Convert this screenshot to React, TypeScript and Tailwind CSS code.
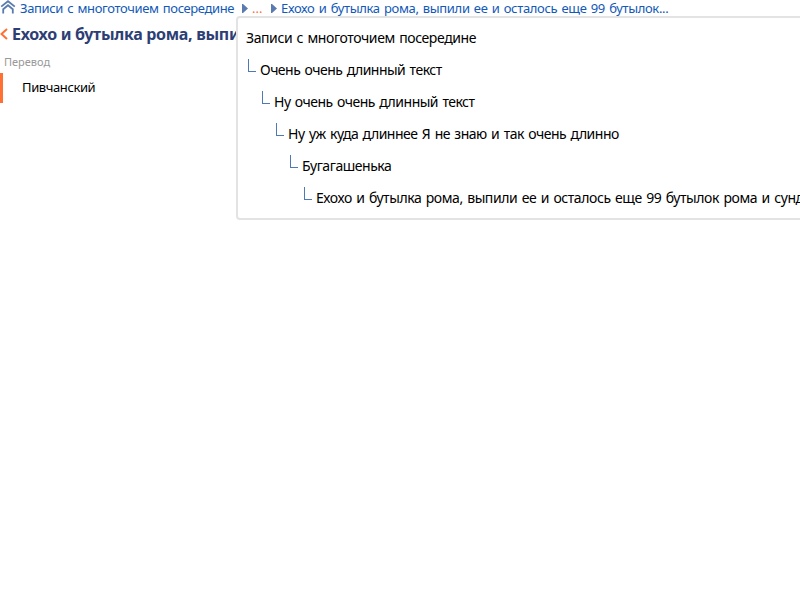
type Item = { text: string; indent: string; tracking: string };

const trail: Item[] = [
  { text: 'Очень очень длинный текст', indent: 'ml-[10px]', tracking: 'tracking-[-0.52px]' },
  { text: 'Ну очень очень длинный текст', indent: 'ml-[24px]', tracking: 'tracking-[-0.5px]' },
  { text: 'Ну уж куда длиннее Я не знаю и так очень длинно', indent: 'ml-[38px]', tracking: 'tracking-[-0.49px]' },
  { text: 'Бугагашенька', indent: 'ml-[52px]', tracking: 'tracking-[-0.45px]' },
  {
    text: 'Ехохо и бутылка рома, выпили ее и осталось еще 99 бутылок рома и сундук мертвеца',
    indent: 'ml-[66px]',
    tracking: 'tracking-[-0.42px]',
  },
];

function HomeIcon() {
  return (
    <svg className="-mt-[2px] h-[14px] w-[16px] shrink-0" viewBox="0 0 16 14" fill="none" stroke="#5b7bb0" strokeWidth="1.8">
      <path d="M1.2 6.6 8 1.2l6.8 5.4" />
      <path d="M3.2 13.5V9.2L8 5.2l4.8 4v4.3" />
    </svg>
  );
}

function Arrow() {
  return (
    <svg className="h-[9px] w-[6px] shrink-0" viewBox="0 0 6 9" fill="#5b7bb0">
      <path d="M0 0h1l5 4.5L1 9H0z" />
    </svg>
  );
}

export default function App() {
  return (
    <div className="relative h-[600px] w-[800px] overflow-hidden bg-white font-['Noto_Sans',sans-serif] text-sm text-black [word-spacing:1.2px]">
      <nav className="flex h-4 items-center whitespace-nowrap text-[13px] leading-4 text-[#1259b8]">
        <HomeIcon />
        <span className="ml-1 w-[222px] tracking-[-0.37px]">Записи с многоточием посередине</span>
        <Arrow />
        <span className="ml-1 w-[15px] text-[#ff7033]">...</span>
        <span className="ml-1 flex">
          <Arrow />
        </span>
        <span className="ml-1 tracking-[-0.34px]">Ехохо и бутылка рома, выпили ее и осталось еще 99 бутылок...</span>
      </nav>
      <header className="flex h-9 items-center whitespace-nowrap">
        <svg className="h-[12px] w-[8px] shrink-0" viewBox="0 0 8 12" fill="none" stroke="#ff7033" strokeWidth="2">
          <path d="M7 1 1.5 6 7 11" />
        </svg>
        <h1 className="ml-1 w-[224px] overflow-hidden text-[16px] font-bold tracking-[-0.3px] text-[#2d3e75] [word-spacing:0px]">
          Ехохо и бутылка рома, выпили ее
        </h1>
      </header>
      <section>
        <h2 className="flex h-[21px] items-center pb-[2px] pl-1 text-[11px] text-[#999999]">Перевод</h2>
        <div className="flex h-[30px] items-center border-l-[3px] border-[#ff7033] pb-[2px] pl-[19px] text-[13px] tracking-[-0.4px]">
          Пивчанский
        </div>
      </section>
      <div className="absolute left-[236px] top-4 w-[640px] rounded-[4px] border-2 border-[#e3e3e3] bg-white py-1">
        <div className="flex h-8 items-center whitespace-nowrap pl-2 tracking-[-0.41px]">Записи с многоточием посередине</div>
        {trail.map((item) => (
          <div key={item.text} className={`flex h-8 whitespace-nowrap leading-8 ${item.indent}`}>
            <span className="mt-[5px] h-[13px] w-2 shrink-0 border-b border-l border-[#5078b4]" />
            <span className={`ml-1 ${item.tracking}`}>{item.text}</span>
          </div>
        ))}
      </div>
    </div>
  );
}
